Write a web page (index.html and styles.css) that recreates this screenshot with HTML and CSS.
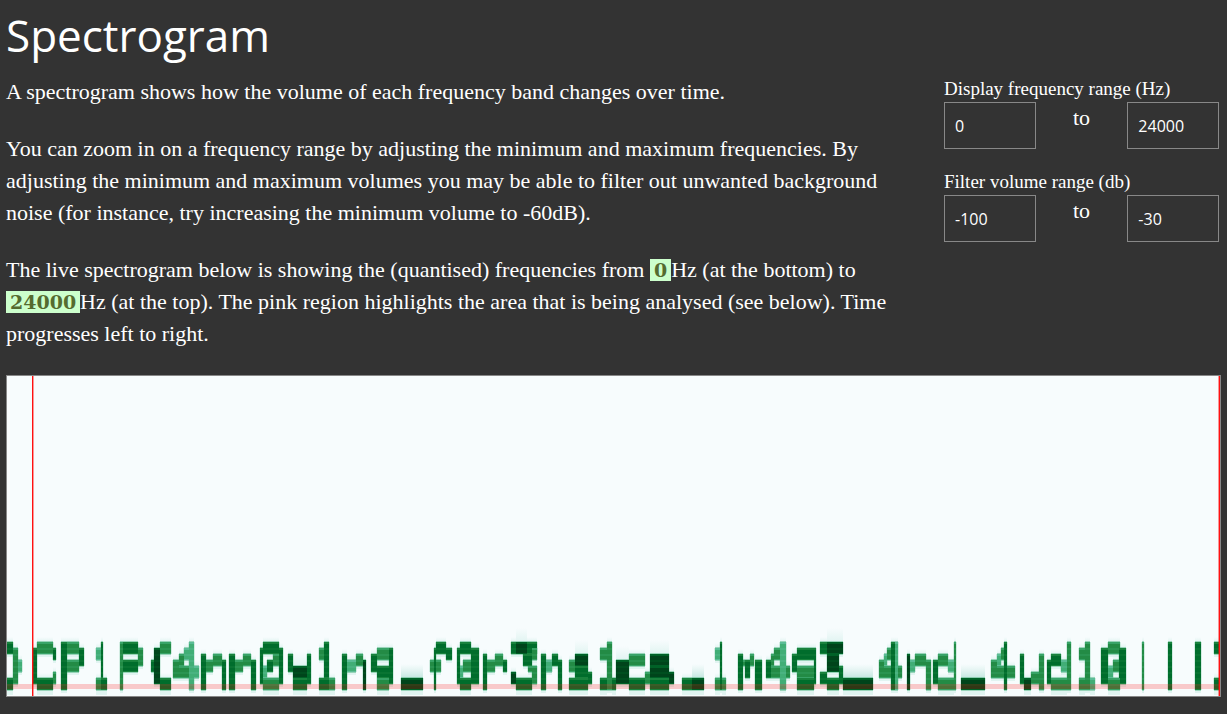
FILE: index.html
```html
<!DOCTYPE html>
<html lang="en">
<head>
<meta charset="utf-8">
<title>Spectrogram</title>
<link rel="stylesheet" href="styles.css">
</head>
<body>
<main class="page">
  <h1 class="title">Spectrogram</h1>
  <div class="intro">
    <div class="copy">
      <p>A spectrogram shows how the volume of each frequency band changes over time.</p>
      <p>You can zoom in on a frequency range by adjusting the minimum and maximum frequencies. By adjusting the minimum and maximum volumes you may be able to filter out unwanted background noise (for instance, try increasing the minimum volume to -60dB).</p>
      <p>The live spectrogram below is showing the (quantised) frequencies from <b class="value">0</b>Hz (at the bottom) to <b class="value">24000</b>Hz (at the top). The pink region highlights the area that is being analysed (see below). Time progresses left to right.</p>
    </div>
    <form class="controls">
      <div class="field">
        <label class="label" for="freq-min">Display frequency range (Hz)</label>
        <div class="range">
          <input class="box" id="freq-min" type="text" value="0">
          <span class="to">to</span>
          <input class="box" type="text" value="24000" aria-label="Maximum frequency">
        </div>
      </div>
      <div class="field">
        <label class="label" for="vol-min">Filter volume range (db)</label>
        <div class="range">
          <input class="box" id="vol-min" type="text" value="-100">
          <span class="to">to</span>
          <input class="box" type="text" value="-30" aria-label="Maximum volume">
        </div>
      </div>
    </form>
  </div>
  <canvas class="spectrogram" id="spectrogram" width="1213" height="320"></canvas>
</main>
<script src="script.js"></script>
</body>
</html>
```
FILE: styles.css
```css
*, *::before, *::after { box-sizing: border-box; }

body {
  margin: 0;
  background: #333;
  color: #fff;
  font-family: Georgia, "Liberation Serif", serif;
  font-size: 22px;
  line-height: 32px;
}

.page { padding: 0 6px 16px; }

.title {
  margin: 0;
  padding: 5px 0 11px;
  font-family: "Segoe UI", "Open Sans", "Noto Sans", sans-serif;
  font-size: 44px;
  font-weight: 400;
  line-height: 60px;
}

.intro {
  display: grid;
  grid-template-columns: minmax(0, 1fr) 275px;
  column-gap: 50px;
  padding-right: 2px;
}

.copy p { margin: 0 0 25px; }

.value {
  padding: 0 4px;
  background: #cfc;
  color: #556b2f;
  font-family: Georgia, "DejaVu Serif", serif;
  font-size: 19px;
  line-height: 22px;
}

.controls {
  display: flex;
  flex-direction: column;
  gap: 20px;
}

.label {
  display: block;
  font-size: 19px;
  line-height: 26px;
}

.range {
  display: grid;
  grid-template-columns: repeat(3, minmax(0, 1fr));
}

.box {
  width: 100%;
  height: 47px;
  padding: 1px 10px;
  border: 1px solid #888;
  border-radius: 0;
  background: transparent;
  color: #fff;
  font: 16px "Segoe UI", "Open Sans", "Noto Sans", sans-serif;
}

.to { text-align: center; }

.spectrogram {
  display: block;
  width: 100%;
  height: 322px;
  border: 1px solid #888;
}
```
FILE: script.js
```js
const palette = ["#f7fcfd", "#e5f5f9", "#ccece6", "#99d8c9", "#66c2a4", "#41ae76", "#238b45", "#006d2c", "#00441b"];
const canvas = document.getElementById("spectrogram");
const ctx = canvas.getContext("2d");

// Each segment: start time, then cells [from, to, first band, last band, level]. Three time ticks per pixel.
const segments = [
  [0, [
    [20,38,0,2,7],[38,54,1,7,6],[54,66,3,5,5],[20,38,6,8,7],
    [99,111,1,7,7],[111,160,0,2,6],[111,160,6,8,7],[160,167,1,3,7],[160,167,5,7,6],
    [182,200,0,8,7],[200,238,0,2,6],[200,238,3,5,6],[238,253,1,4,7],
    [288,302,1,3,5],[302,309,0,6,7],[288,302,6,8,6],[302,321,6,8,7],
    [359,370,0,8,6],[370,414,0,2,7],[370,414,3,5,7],[414,430,1,4,6],
    [453,463,3,5,7],[463,481,1,7,8],[481,512,0,2,6],[481,512,6,8,7],
    [520,537,3,6,6],[537,552,2,4,6],[552,568,1,3,5],[568,583,0,8,5],[537,568,4,6,6],[583,596,4,6,5]
  ]],
  [600, [
    [3,18,2,8,7],[18,40,3,5,6],[40,66,2,4,6],[66,77,3,8,7],
    [88,106,2,8,7],[106,128,3,5,6],[128,152,2,4,6],[152,167,3,8,7],
    [179,190,1,7,7],[190,238,0,2,7],[238,250,1,7,7],[218,238,2,4,6],[202,218,3,5,7],[190,202,4,6,5],[190,238,6,8,6],
    [264,280,2,5,7],[280,320,4,6,8],[280,320,6,8,7],[320,332,2,7,7],
    [356,372,1,3,6],[372,388,0,6,7],[356,388,6,8,7],[388,404,6,8,6],
    [427,442,2,8,7],[442,468,3,5,5],[468,490,2,4,6],[490,497,3,8,8],
    [513,531,2,5,7],[531,568,1,3,6],[568,580,1,7,7],[531,568,4,6,7],[531,568,6,8,6]
  ]],
  [1200, [
    [3,70,6,8,8],
    [90,101,3,5,6],[108,122,3,5,6],[101,108,1,8,7],[108,138,0,2,7],[138,156,1,3,7],
    [172,180,1,7,7],[180,212,0,2,7],[190,212,3,5,6],[180,190,4,6,5],[212,238,1,7,7],[180,212,6,8,7],
    [250,262,2,8,7],[262,285,3,5,6],[285,310,2,4,6],[310,321,3,5,7],
    [333,347,0,2,7],[347,380,0,2,8],[380,411,0,2,7],[368,397,2,4,7],[397,411,1,3,6],[385,397,4,5,6],[333,347,5,7,8],[397,411,4,7,6],[347,397,6,8,7],
    [422,438,2,8,7],[438,455,3,5,5],[455,475,2,4,7],[475,487,3,8,7],
    [508,525,3,5,6],[525,565,2,4,8],[525,565,4,6,7],[565,576,5,7,7],[508,565,6,8,7],
    [600,620,1,3,6],[620,637,0,8,6],[600,620,6,8,7],[637,647,6,8,7]
  ]],
  [1800, [
    [47,88,3,7,8],[88,134,2,4,6],[88,134,6,8,7],
    [134,150,5,7,6],[150,208,2,4,8],[150,208,4,6,8],[150,208,6,8,7],[208,223,5,7,8],
    [247,275,6,8,7],[275,311,6,8,8],
    [345,360,1,3,5],[360,367,0,8,7],[345,360,6,8,6],[367,378,6,8,6],
    [415,428,2,8,7],[428,435,3,4,6],[435,450,3,6,7],[450,463,2,4,6],[465,486,3,8,7],
    [498,512,3,6,7],[512,522,2,4,6],[522,540,1,3,6],[540,557,0,8,5],[512,540,4,6,6],[557,570,4,6,6],
    [577,592,2,5,7],[592,641,1,3,7],[592,641,4,6,6],[592,641,6,8,7],[641,647,1,7,7]
  ]],
  [2400, [
    [60,82,0,2,7],[82,130,0,2,8],[82,118,2,5,8],[60,82,5,7,7],[118,130,4,7,7],[82,118,6,8,7],
    [130,220,6,8,8],
    [236,252,3,6,6],[252,260,2,4,5],[260,274,1,3,6],[274,284,0,8,7],[284,295,0,8,5],[252,274,4,6,6],[295,307,4,6,6],
    [322,330,2,8,8],[330,345,3,5,5],[345,378,2,4,6],[378,393,3,8,6],
    [398,415,3,7,7],[415,445,2,4,6],[445,461,3,5,5],[461,468,0,8,6],[415,461,6,8,6],
    [484,554,6,8,8],
    [574,590,3,6,6],[590,604,2,4,5],[604,612,1,3,6],[611,622,0,8,7],[590,611,4,6,6],[622,644,4,6,6]
  ]],
  [3000, [
    [60,71,2,7,7],[71,94,6,8,8],[94,116,5,7,6],[116,131,2,8,6],
    [142,154,3,7,7],[154,184,2,4,7],[184,202,3,5,5],[202,213,0,8,6],[154,202,6,8,6],
    [236,254,1,3,6],[254,270,0,8,6],[236,254,6,8,6],[270,284,6,8,5],
    [303,325,1,7,7],[325,360,0,2,6],[340,358,3,5,6],[325,340,4,6,5],[358,379,1,7,7],[325,360,6,8,6],
    [427,431,0,8,6],[503,516,0,8,7],[585,603,0,8,7],
    [641,656,0,2,7],[641,656,6,8,7]
  ]]
];
const bandHeight = 6;
const topEdge = 266;

ctx.fillStyle = palette[0];
ctx.fillRect(0, 0, canvas.width, canvas.height);

function eachCell(draw) {
  for (const [start, cells] of segments) {
    for (const [from, to, a, b, level] of cells) {
      const x = Math.round((start + from) / 3) - 7;
      const right = Math.round((start + to) / 3) - 7;
      draw(x, topEdge + a * bandHeight, right - x, (b - a) * bandHeight, level, a);
    }
  }
}

// Leakage into neighbouring bands, strongest above wide loud cells.
eachCell((x, y, w, h, level, band) => {
  const loud = level === 8 && w > 9;
  const spread = loud ? 14 : 5;
  const glow = ctx.createLinearGradient(0, y - spread, 0, y);
  glow.addColorStop(0, "rgba(204,236,230,0)");
  glow.addColorStop(1, loud && band === 6 ? "rgba(190,228,220,.9)" : "rgba(204,236,230,.5)");
  ctx.fillStyle = glow;
  ctx.fillRect(x, y - spread, w, spread);
  ctx.fillStyle = "rgba(204,236,230,.5)";
  ctx.fillRect(x, y + h, w, band >= 6 ? 5 : 3);
});
eachCell((x, y, w, h) => {
  ctx.fillStyle = palette[5];
  ctx.globalAlpha = 0.45;
  ctx.fillRect(x, y - 1, w, h + 2);
  ctx.globalAlpha = 0.2;
  ctx.fillRect(x - 1, y, w + 2, h);
  ctx.globalAlpha = 1;
});
eachCell((x, y, w, h, level) => {
  ctx.fillStyle = palette[level];
  ctx.fillRect(x, y, w, h);
  ctx.fillStyle = palette[level - 1];
  ctx.globalAlpha = 0.7;
  ctx.fillRect(x, y, w, 2);
  ctx.fillRect(x, y + h - 1, w, 1);
  ctx.globalAlpha = 0.25;
  for (let line = 6; line < h - 2; line += bandHeight) {
    ctx.fillRect(x, y + line, w, 2);
  }
  ctx.globalAlpha = 1;
});

// Analysed band and time cursors.
ctx.fillStyle = "rgba(255,0,0,.2)";
ctx.fillRect(0, 308, canvas.width, 5);
ctx.fillStyle = "rgba(255,0,0,.4)";
ctx.fillRect(26, 0, 1, 320);
ctx.fillRect(1211, 0, 1, 320);
ctx.fillStyle = "#f11";
ctx.fillRect(25, 0, 1, 320);
ctx.fillRect(1212, 0, 1, 320);
```
